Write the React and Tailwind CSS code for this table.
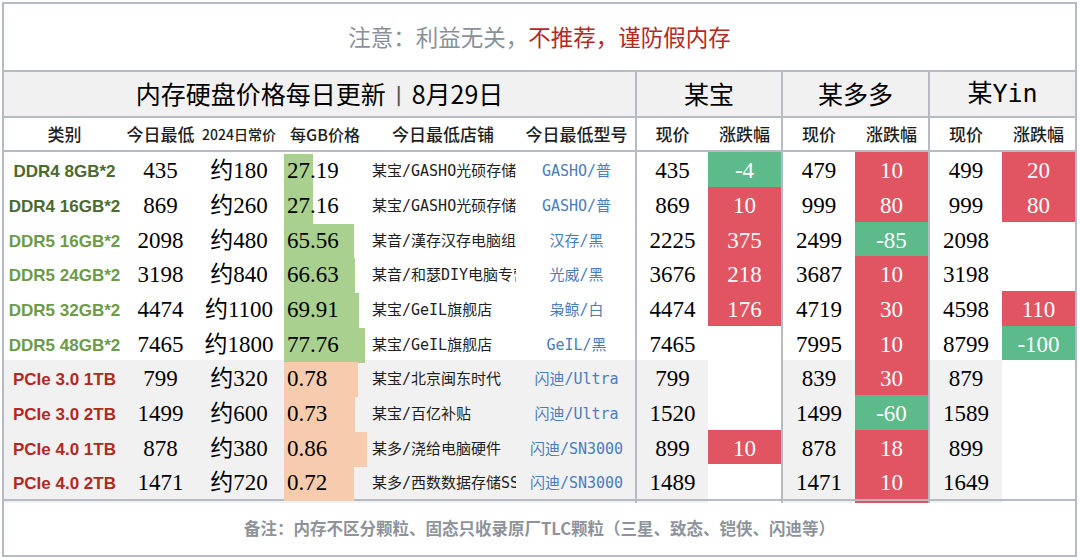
const SERIF = "font-['Liberation_Serif','Noto_Sans_CJK_SC',serif]"
const SANS = "font-['Noto_Sans_CJK_SC','Noto_Sans',sans-serif]"
const MONO = "font-['DejaVu_Sans_Mono','Noto_Sans_CJK_SC',monospace]"
const ARIAL = "font-['Liberation_Sans','Noto_Sans_CJK_SC',sans-serif]"

const GRID =
  "grid grid-cols-[121px_71px_86px_86px_150px_117px_2px_71px_73px_2px_72px_73px_2px_72px_73px]"

const rows = [
  { label: "DDR4 8GB*2", kind: "ddr4", low: "435", usual: "约180", gb: "27.19", bar: 29, shop: "某宝/GASHO光硕存储", model: "GASHO/普", tb: "435", tbc: "-4", pdd: "479", pddc: "10", yin: "499", yinc: "20" },
  { label: "DDR4 16GB*2", kind: "ddr4", low: "869", usual: "约260", gb: "27.16", bar: 29, shop: "某宝/GASHO光硕存储", model: "GASHO/普", tb: "869", tbc: "10", pdd: "999", pddc: "80", yin: "999", yinc: "80" },
  { label: "DDR5 16GB*2", kind: "ddr5", low: "2098", usual: "约480", gb: "65.56", bar: 70, shop: "某音/漢存汉存电脑组装", model: "汉存/黑", tb: "2225", tbc: "375", pdd: "2499", pddc: "-85", yin: "2098", yinc: "" },
  { label: "DDR5 24GB*2", kind: "ddr5", low: "3198", usual: "约840", gb: "66.63", bar: 71, shop: "某音/和瑟DIY电脑专营", model: "光威/黑", tb: "3676", tbc: "218", pdd: "3687", pddc: "10", yin: "3198", yinc: "" },
  { label: "DDR5 32GB*2", kind: "ddr5", low: "4474", usual: "约1100", gb: "69.91", bar: 75, shop: "某宝/GeIL旗舰店", model: "枭鲸/白", tb: "4474", tbc: "176", pdd: "4719", pddc: "30", yin: "4598", yinc: "110" },
  { label: "DDR5 48GB*2", kind: "ddr5", low: "7465", usual: "约1800", gb: "77.76", bar: 81, shop: "某宝/GeIL旗舰店", model: "GeIL/黑", tb: "7465", tbc: "", pdd: "7995", pddc: "10", yin: "8799", yinc: "-100" },
  { label: "PCIe 3.0 1TB", kind: "ssd", low: "799", usual: "约320", gb: "0.78", bar: 74, shop: "某宝/北京闽东时代", model: "闪迪/Ultra", tb: "799", tbc: "", pdd: "839", pddc: "30", yin: "879", yinc: "" },
  { label: "PCIe 3.0 2TB", kind: "ssd", low: "1499", usual: "约600", gb: "0.73", bar: 71, shop: "某宝/百亿补贴", model: "闪迪/Ultra", tb: "1520", tbc: "", pdd: "1499", pddc: "-60", yin: "1589", yinc: "" },
  { label: "PCIe 4.0 1TB", kind: "ssd", low: "878", usual: "约380", gb: "0.86", bar: 83, shop: "某多/浇给电脑硬件", model: "闪迪/SN3000", tb: "899", tbc: "10", pdd: "878", pddc: "18", yin: "899", yinc: "" },
  { label: "PCIe 4.0 2TB", kind: "ssd", low: "1471", usual: "约720", gb: "0.72", bar: 70, shop: "某多/西数数据存储SSD", model: "闪迪/SN3000", tb: "1489", tbc: "", pdd: "1471", pddc: "10", yin: "1649", yinc: "" },
]

const labelColor = {
  ddr4: "text-[#4b6a30]",
  ddr5: "text-[#6b9b46]",
  ssd: "text-[#b3291f]",
}

function Divider() {
  return <div className="bg-[#b6bac2]" />
}

function Change({ value }) {
  let tone = "bg-white"
  if (value && value.startsWith("-")) tone = "bg-[#5dba8a]"
  else if (value) tone = "bg-[#e15562]"
  return (
    <div className={`flex items-center justify-center text-[23px] text-white ${SERIF} ${tone}`}>
      {value}
    </div>
  )
}

function Num({ bg, children }) {
  return (
    <div className={`flex items-center justify-center whitespace-nowrap text-[23px] text-black ${SERIF} ${bg}`}>
      {children}
    </div>
  )
}

function Row({ r, h }) {
  const ssd = r.kind === "ssd"
  const cell = ssd ? "bg-[#f1f1f1]" : "bg-white"
  return (
    <div className={`${GRID} ${h}`}>
      <div className={`flex items-center justify-center text-[17px] font-bold whitespace-nowrap ${ARIAL} ${labelColor[r.kind]} ${cell}`}>
        {r.label}
      </div>
      <Num bg={cell}>{r.low}</Num>
      <Num bg={cell}>{r.usual}</Num>
      <div className={`flex items-center py-[2px] pl-[2px] ${cell}`}>
        <div className="relative h-full">
          <div
            className={`absolute left-0 top-0 h-full ${ssd ? "bg-[#f7cbad]" : "bg-[#a9d08e]"}`}
            style={{ width: r.bar }}
          />
          <span className={`relative flex h-full items-center pl-[3px] text-[23px] text-black ${SERIF}`}>{r.gb}</span>
        </div>
      </div>
      <div className={`flex items-center overflow-hidden whitespace-nowrap pl-[4px] pr-[2px] text-[15px] text-[#1e1e1e] ${MONO} ${cell}`}>
        <span className="overflow-hidden">{r.shop}</span>
      </div>
      <div className={`flex items-center justify-center whitespace-nowrap text-[15px] text-[#4a7dbe] ${MONO} ${cell}`}>
        {r.model}
      </div>
      <Divider />
      <Num bg={cell}>{r.tb}</Num>
      <Change value={r.tbc} />
      <Divider />
      <Num bg={cell}>{r.pdd}</Num>
      <Change value={r.pddc} />
      <Divider />
      <Num bg={cell}>{r.yin}</Num>
      <Change value={r.yinc} />
    </div>
  )
}

const heights = ["h-[35px]", "h-[35px]", "h-[34px]", "h-[35px]", "h-[35px]", "h-[34px]", "h-[35px]", "h-[35px]", "h-[34px]", "h-[35px]"]

export default function App() {
  return (
    <div className="h-[560px] w-[1080px] bg-white pl-[2px] pt-[2px]">
      <div className="flex h-[555px] w-[1075px] flex-col border-2 border-[#b6bac2]">
        {/* notice */}
        <div className={`flex h-[66px] items-center justify-center text-[22.5px] ${SANS}`}>
          <span className="text-[#8a9099]">注意：利益无关，</span>
          <span className="text-[#b5281f]">不推荐，谨防假内存</span>
        </div>
        <div className="h-[2px] bg-[#b6bac2]" />

        {/* title */}
        <div className={`${GRID} h-[44px] bg-[#f1f1f1] text-black`}>
          <div className={`col-span-6 flex items-center justify-center text-[25px] ${SANS}`}>
            <span>内存硬盘价格每日更新</span>
            <span className="px-[2px] text-[22px] text-[#555]">丨</span>
            <span>8月29日</span>
          </div>
          <Divider />
          <div className={`col-span-2 flex items-center justify-center text-[25px] ${SANS}`}>某宝</div>
          <Divider />
          <div className={`col-span-2 flex items-center justify-center text-[25px] ${SANS}`}>某多多</div>
          <Divider />
          <div className={`col-span-2 flex items-center justify-center text-[25px] ${MONO}`}>某Yin</div>
        </div>
        <div className="h-[2px] bg-[#b6bac2]" />

        {/* column labels */}
        <div className={`${GRID} h-[32px] text-[17px] font-medium text-[#1e1e1e] ${SANS}`}>
          <div className="flex items-center justify-center">类别</div>
          <div className="flex items-center justify-center">今日最低</div>
          <div className="flex items-center justify-center text-[14px]">2024日常价</div>
          <div className="flex items-center justify-center text-[16px]">每GB价格</div>
          <div className="flex items-center justify-center">今日最低店铺</div>
          <div className="flex items-center justify-center">今日最低型号</div>
          <Divider />
          <div className="flex items-center justify-center">现价</div>
          <div className="flex items-center justify-center">涨跌幅</div>
          <Divider />
          <div className="flex items-center justify-center">现价</div>
          <div className="flex items-center justify-center">涨跌幅</div>
          <Divider />
          <div className="flex items-center justify-center">现价</div>
          <div className="flex items-center justify-center">涨跌幅</div>
        </div>
        <div className="h-[2px] bg-[#b6bac2]" />

        {/* data */}
        <div className="flex flex-col">
          {rows.map((r, i) => (
            <Row key={r.label} r={r} h={heights[i]} />
          ))}
        </div>
        <div className="h-[2px] bg-[#b6bac2]" />

        {/* footer */}
        <div className={`flex flex-1 items-center justify-center text-[16.5px] font-bold text-[#8e939b] ${SANS}`}>
          备注：内存不区分颗粒、固态只收录原厂TLC颗粒（三星、致态、铠侠、闪迪等）
        </div>
      </div>
    </div>
  )
}
